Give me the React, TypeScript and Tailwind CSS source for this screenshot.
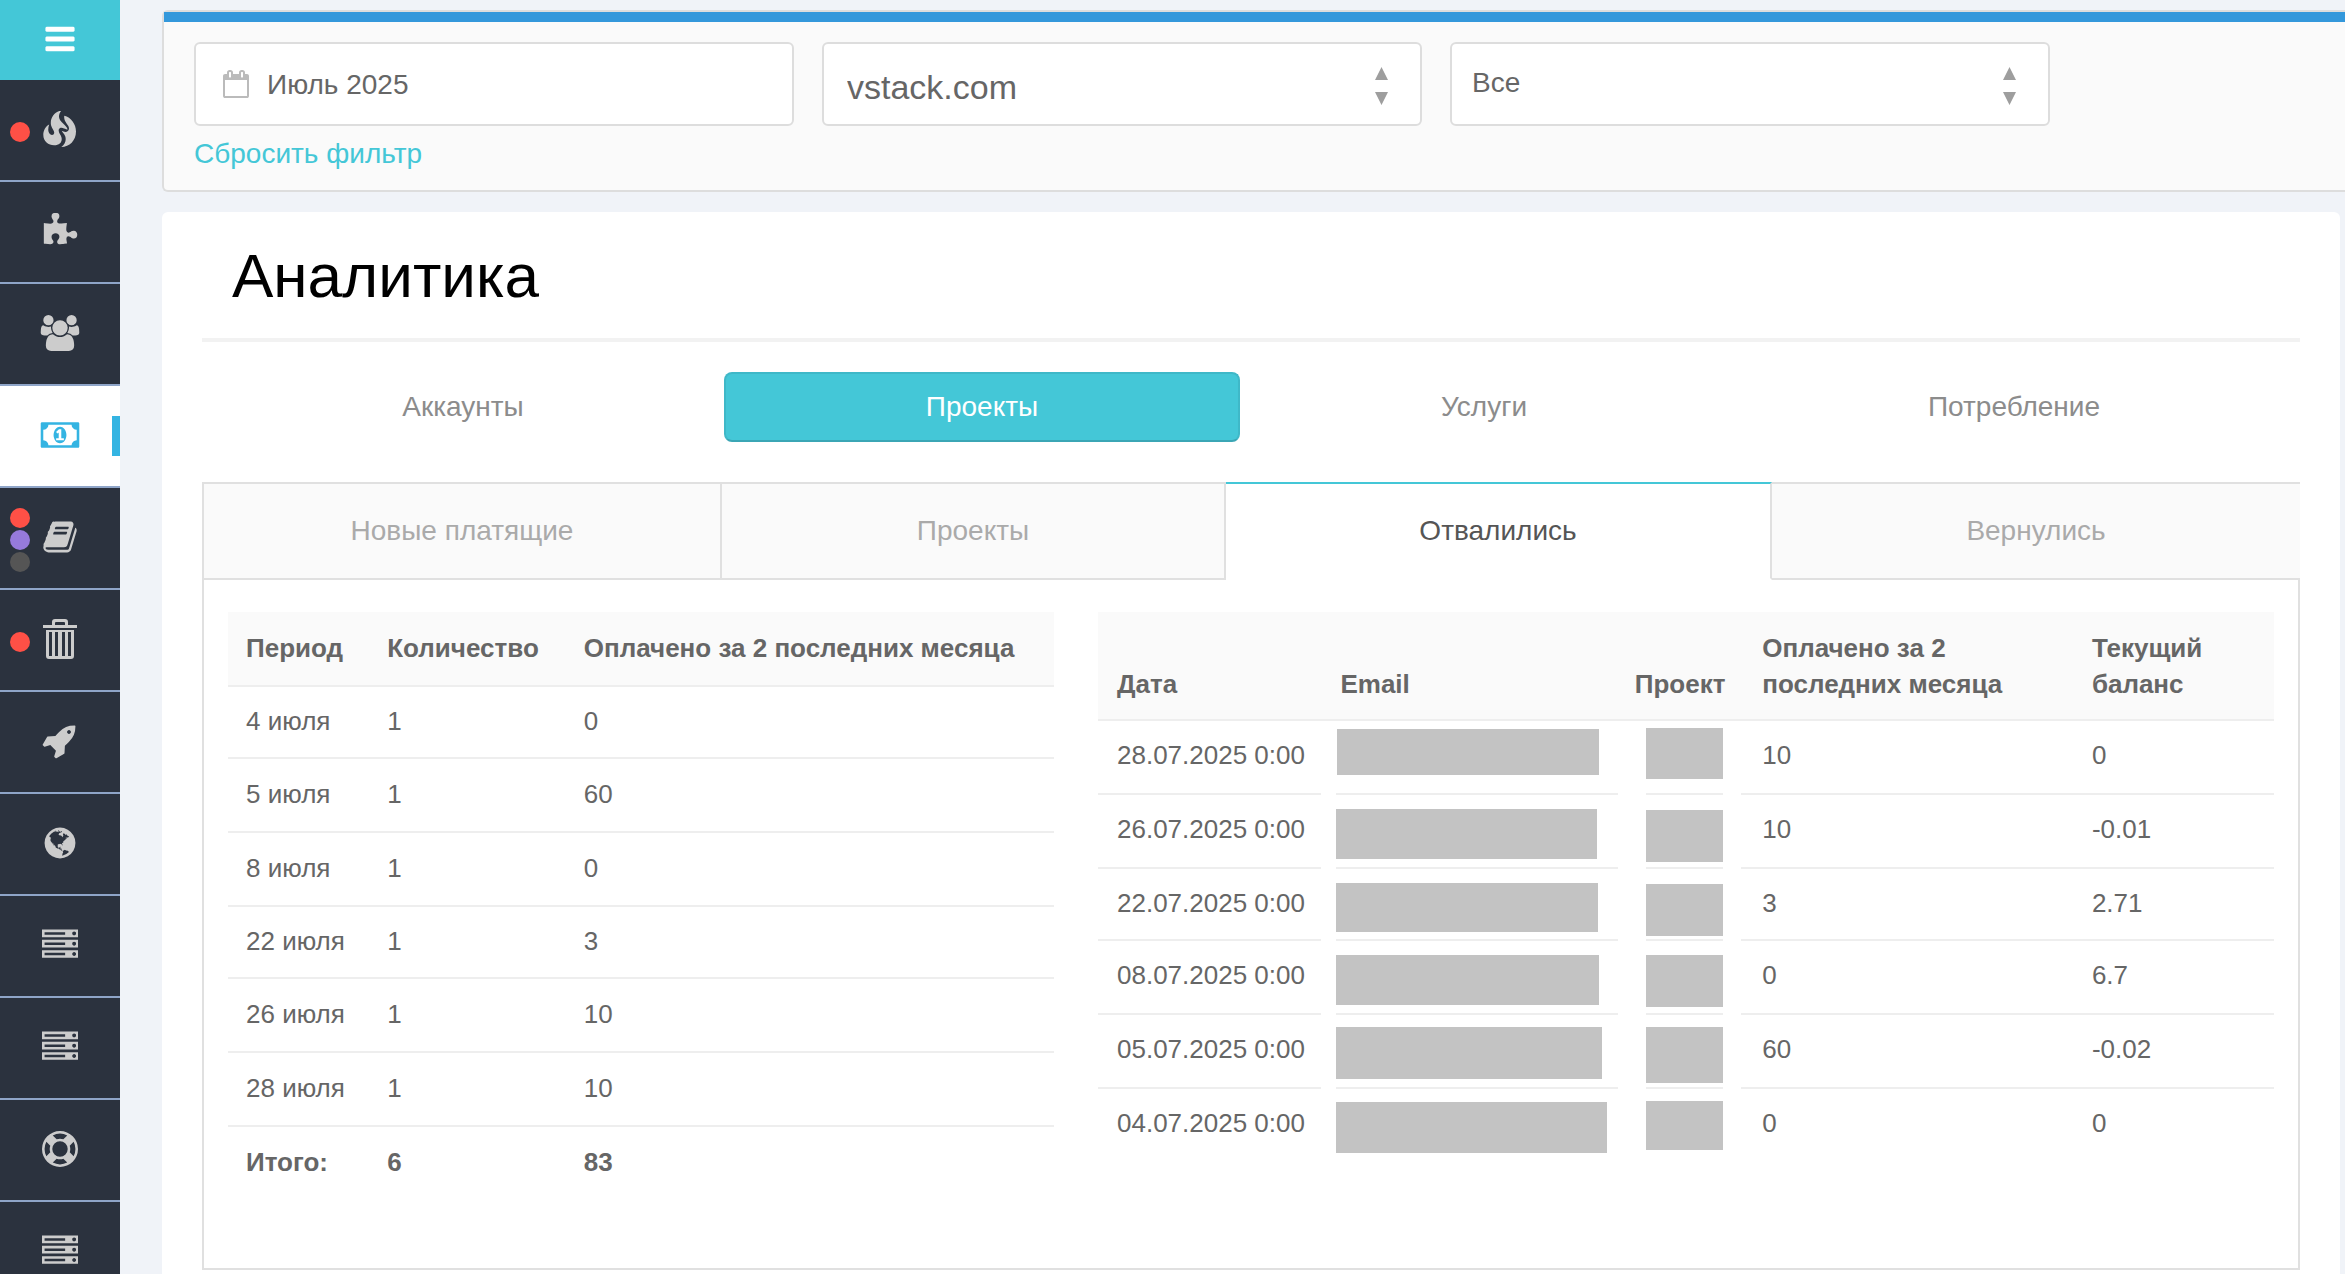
import React from "react";

type Glyph = { box: string; d: string };

const glyphs: Record<string, Glyph> = {
  bars: {
    box: "0 0 1792 1792",
    d: "M1664 1344v128q0 26-19 45t-45 19h-1408q-26 0-45-19t-19-45v-128q0-26 19-45t45-19h1408q26 0 45 19t19 45zm0-512v128q0 26-19 45t-45 19h-1408q-26 0-45-19t-19-45v-128q0-26 19-45t45-19h1408q26 0 45 19t19 45zm0-512v128q0 26-19 45t-45 19h-1408q-26 0-45-19t-19-45v-128q0-26 19-45t45-19h1408q26 0 45 19t19 45z",
  },
  flame: {
    box: "41 111 36 36",
    d: "M60.5 110.5C54 111.500 49.500 117 49.800 123.500C50 128 53.500 130 53.200 133C52.800 136 48.500 135.500 47.500 131.500C47 129.500 47.300 127 48.200 124.500C44.500 126.500 42.300 130.500 42.300 134.800C42.300 141.500 47.500 145.300 53 145.300C59 145.300 61.500 141.500 60.500 137.500C59.800 134.500 57 132.500 57.800 129.500C58.500 127.500 61 127.500 63 128.500C64.500 129 66 129.500 66.500 129.500C66.500 125.500 58.500 122.500 58 117C57.800 114.500 59 112 60.500 110.500ZM63.300 115.800C70 117.500 75 124 75 131.500C75 140.500 68.500 147 60.300 147C64.500 144 65.300 140 64.300 136.500C63.600 134 61.200 132.500 60.800 130.800C63.500 132.500 67.800 132.500 68 128.500C68 124.500 62.200 122 63.300 115.800Z",
  },
  puzzle: {
    box: "0 0 1792 1792",
    d: "M1755 1083q0 81-44.5 135t-123.5 54q-41 0-77.5-17.5t-59-38-56.500-38-71-17.500q-110 0-110 124 0 39 16 115t15 115v5q-22 0-33 1-34 3-97.500 11.500t-115.500 13.500-98 5q-61 0-103-26.500t-42-83.500q0-37 17.500-71t38-56.500 38-59 17.500-77.500q0-79-54-123.500t-135-44.500q-84 0-143 45.500t-59 127.500q0 43 15 83t33.500 64.500 33.500 53 15 50.500q0 45-46 89-37 35-117 35-95 0-245-24-9-2-27.500-4t-27.500-4l-13-2q-1 0-3-1-2 0-2-1v-1024q2 1 17.500 3.500t34 5 21.500 3.500q150 24 245 24 80 0 117-35 46-44 46-89 0-22-15-50.500t-33.500-53-33.500-64.500-15-83q0-82 59-127.500t144-45.500q80 0 134 44.500t54 123.500q0 41-17.500 77.500t-38 59-38 56.500-17.500 71q0 57 42 83.500t103 26.500q64 0 180-15t163-17v2q-1 2-3.500 17.500t-5 34-3.500 21.500q-24 150-24 245 0 80 35 117 44 46 89 46 22 0 50.500-15t53-33.500 64.500-33.500 83-15q82 0 127.500 59t45.500 143z",
  },
  users: {
    box: "0 0 1920 1792",
    d: "M593 896q-162 5-265 128h-134q-82 0-138-40.5t-56-118.5q0-353 124-353 6 0 43.5 21t97.5 42.5 119 21.5q67 0 133-23-5 37-5 66 0 139 81 256zm1071 637q0 120-73 189.5t-194 69.5h-874q-121 0-194-69.5t-73-189.5q0-53 3.5-103.5t14-109 26.5-108.5 43-97.5 62-81 85.5-53.5 111.5-20q10 0 43 21.5t73 48 107 48 135 21.5 135-21.5 107-48 73-48 43-21.5q61 0 111.5 20t85.5 53.5 62 81 43 97.5 26.5 108.5 14 109 3.5 103.5zm-1024-1277q0 106-75 181t-181 75-181-75-75-181 75-181 181-75 181 75 75 181zm704 384q0 159-112.5 271.5t-271.5 112.5-271.5-112.5-112.5-271.5 112.5-271.5 271.5-112.5 271.5 112.5 112.5 271.5zm576 225q0 78-56 118.5t-138 40.5h-134q-103-123-265-128 81-117 81-256 0-29-5-66 66 23 133 23 59 0 119-21.5t97.5-42.5 43.5-21q124 0 124 353zm-128-609q0 106-75 181t-181 75-181-75-75-181 75-181 181-75 181 75 75 181z",
  },
  money: {
    box: "0 0 1920 1792",
    d: "M768 1152h384v-96h-128v-448h-114l-148 137 77 80q42-37 55-57h2v288h-128v96zm512-256q0 70-21 142t-59.5 134-101.5 101-138 39-138-39-101.5-101-59.5-134-21-142 21-142 59.5-134 101.5-101 138-39 138 39 101.5 101 59.5 134 21 142zm512 256v-512q-106 0-181-75t-75-181h-1152q0 106-75 181t-181 75v512q106 0 181 75t75 181h1152q0-106 75-181t181-75zm128-832v1152q0 26-19 45t-45 19h-1792q-26 0-45-19t-19-45v-1152q0-26 19-45t45-19h1792q26 0 45 19t19 45z",
  },
  book: {
    box: "0 0 1792 1792",
    d: "M1703 478q40 57 18 129l-275 906q-19 64-76.5 107.5t-122.5 43.5h-923q-77 0-148.5-53.5t-99.5-131.5q-24-67-2-127 0-4 3-27t4-37q1-8-3-21.5t-3-19.5q2-11 8-21t16.5-23.5 16.5-23.5q23-38 45-91.5t30-91.5q3-10 .5-30t-.5-28q3-11 17-28t17-23q21-36 42-92t25-90q1-9-2.5-32t.5-28q4-13 22-30.5t22-22.5q19-26 42.5-84.5t27.5-96.5q1-8-3-25.5t-2-26.5q2-8 9-18t18-23 17-21q8-12 16.5-30.5t15-35 16-36 19.5-32 26.5-23.5 36-11.5 47.5 5.5l-1 3q38-9 51-9h761q74 0 114 56t18 130l-274 906q-36 119-71.5 153.5t-128.5 34.5h-869q-27 0-38 15-11 16-1 43 24 70 144 70h923q29 0 56-15.5t35-41.5l300-987q7-22 5-57 38 15 59 43zm-1064 2q-4 13 2 22.5t20 9.5h608q13 0 25.5-9.5t16.5-22.5l21-64q4-13-2-22.5t-20-9.5h-608q-13 0-25.5 9.5t-16.5 22.5zm-83 256q-4 13 2 22.5t20 9.5h608q13 0 25.5-9.5t16.5-22.5l21-64q4-13-2-22.5t-20-9.5h-608q-13 0-25.5 9.5t-16.5 22.5z",
  },
  trash: {
    box: "0 0 34 40",
    d: "M9 6V3q0-3 3-3h10q3 0 3 3v3h9v3h-34v-3zM12 6h10v-2q0-1-1-1h-8q-1 0-1 1zM3 11h28v26q0 3-3 3h-22q-3 0-3-3zM6 13v24h3v-24zM12 13v24h3v-24zM19 13v24h3v-24zM25 13v24h3v-24z",
  },
  rocket: {
    box: "0 0 1792 1792",
    d: "M1440 448q0-40-28-68t-68-28-68 28-28 68 28 68 68 28 68-28 28-68zm224-288q0 249-75.5 430.5t-253.5 360.5q-81 80-195 176l-20 379q-2 16-16 26l-384 224q-7 4-16 4-12 0-23-9l-64-64q-13-14-8-32l85-276-281-281-276 85q-3 1-9 1-14 0-23-9l-64-64q-17-19-5-39l224-384q10-14 26-16l379-20q96-114 176-195 188-187 358-258t431-71q14 0 24 9.5t10 22.5z",
  },
  globe: {
    box: "0 0 1792 1792",
    d: "M896 128q209 0 385.5 103t279.5 279.5 103 385.5-103 385.5-279.5 279.5-385.5 103-385.5-103-279.5-279.5-103-385.5 103-385.5 279.500-279.500 385.500-103zm274 521q-2 1-9.500 9.500t-13.500 9.500q2 0 4.500-5t5-11 3.500-7q6-7 22-15 14-6 52-12 34-8 51 11-2-2 9.500-13t14.500-12q3-2 15-4.500t15-7.500l2-22q-12 1-17.500-7t-6.500-21q0 2-6 8 0-7-4.500-8t-11.500 1-9 1q-10-3-15-7.500t-8-16.500-4-15q-2-5-9.500-11t-9.500-10q-1-2-2.500-5.500t-3-6.500-4-5.500-5.500-2.500-7 5-7.500 10-4.500 5q-3-2-6-1.500t-4.500 1-4.500 3-5 3.500q-3 2-8.500 3t-8.500 2q15-5-1-11-10-4-16-3 9-4 7.500-12t-8.500-14h5q-1-4-8.500-8.500t-17.500-8.500-13-6q-8-5-34-9.500t-33-.5q-5 6-4.500 10.500t4 14 3.500 12.500q1 6-5.500 13t-6.500 12q0 7 14 15.500t10 21.500q-3 8-16 16t-16 12q-5 8-1.500 18.500t10.500 16.500q2 2 1.500 4t-3.500 4.500-5.500 4-6.500 3.500l-3 2q-11 5-20.500-6t-13.500-26q-7-25-16-30-23-8-29 1-5-13-41-26-25-9-58-4 6-1 0-15-7-15-19-12 3-6 4-17.500t1-13.500q3-13 12-23 1-1 7-8.500t9.500-13.500.5-6q35 4 50-11 5-5 11.500-17t10.500-17q9-6 14-5.500t14.500 5.500 14.500 5q14 1 15.500-11t-7.500-20q12 1 3-17-4-7-8-9-12-4-27 5-8 4 2 8-1-1-9.500 10.500t-16.500 17.500-16-5q-1-1-5.500-13.500t-9.500-13.500q-8 0-16 15 3-8-11-15t-24-8q19-12-8-27-7-4-20.500-5t-19.500 4q-5 7-5.500 11.500t5 8 10.500 5.500 11.500 4 8.500 3q14 10 8 14-2 1-8.500 3.500t-11.500 4.500-6 4q-3 4 0 14t-2 14q-5-5-9-17.500t-7-16.500q7 9-25 6l-10-1q-4 0-16 2t-20.500 1-13.500-8q-4-8 0-20 1-4 4-2-4-3-11-9.500t-10-8.500q-46 15-94 41 6 1 12-1 5-2 13-6.500t10-5.500q34-14 42-7l5-5q14 16 20 25-7-4-30-1-20 6-22 12 7 12 5 18-4-3-11.500-10t-14.500-11-15-5q-16 0-22 1-146 80-235 222 7 7 12 8 4 1 5 9t2.500 11 11.500-3q9 8 3 19 1-1 44 27 19 17 21 21 3 11-10 18-1-2-9-9t-9-4q-3 5 .5 18.500t10.500 12.500q-7 0-9.500 16t-2.500 35.500-1 23.500l2 1q-3 12 5.500 34.500t21.500 19.500q-13 3 20 43 6 8 8 9 3 2 12 7.500t15 10 10 10.500q4 5 10 22.500t14 23.500q-2 6 9.500 20t10.500 23q-1 0-2.500 1t-2.500 1q3 7 15.500 14t15.500 13q1 3 2 10t3 11 8 2q2-20-24-62-15-25-17-29-3-5-5.500-15.500t-4.500-14.500q2 0 6 1.500t8.500 3.500 7.500 4 2 3q-3 7 2 17.500t12 18.500 17 19 12 13q6 6 14 19.500t0 13.500q9 0 20 10t17 20q5 8 8 26t5 24q2 7 8.500 13.500t12.500 9.500l16 8 13 7q5 2 18.500 10.500t21.500 11.500q10 4 16 4t14.500-2.500 13.500-3.500q15-2 29 15t21 21q36 19 55 11-2 1 .5 7.500t8 15.500 9 14.500 5.500 8.500q5 6 18 15t18 15q6-4 7-9-3 8 7 20t18 10q14-3 14-32-31 15-49-18 0-1-2.500-5.500t-4-8.500-2.500-8.500 0-7.500 5-3q9 0 10-3.500t-2-12.500-4-13q-1-8-11-20t-12-15q-5 9-16 8t-16-9q0 1-1.500 5.500t-1.500 6.500q-13 0-15-1 1-3 2.500-17.500t3.500-22.500q1-4 5.500-12t7.500-14.500 4-12.500-4.500-9.500-17.500-2.500q-19 1-26 20-1 3-3 10.500t-5 11.500-9 7q-7 3-24 2t-24-5q-13-8-22.500-29t-9.500-37q0-10 2.500-26.500t3-25-5.500-24.500q3-2 9-9.500t10-10.500q2-1 4.500-1.500t4.500 0 4-1.500 3-6q-1-1-4-3-3-3-4-3 7 3 28.500-1.500t27.500 1.500q15 11 22-2 0-1-2.500-9.500t-.5-13.500q5 27 29 9 3 3 15.500 5t17.500 5q3 2 7 5.500t5.500 4.500 5-.5 8.500-6.500q10 14 12 24 11 40 19 44 7 3 11 2t4.500-9.500 0-14-1.500-12.500l-1-8v-18l-1-8q-15-3-18.500-12t1.500-18.500 15-18.500q1-1 8-3.500t15.500-6.500 12.500-8q21-19 15-35 7 0 11-9-1 0-5-3t-7.500-5-4.500-2q9-5 2-16 5-3 7.500-11t7.500-10q9 12 21 2 7-8 1-16 5-7 20.500-10.500t18.500-9.500q7 2 8-2t1-12 3-12q4-5 15-9t13-5l17-11q3-4 0-4 18 2 31-11 10-11-6-20 3-6-3-9.500t-15-5.500q3-1 11.500-.5t10.500-1.500q15-10-7-16-17-5-43 12zm-163 877q206-36 351-189-3-3-12.500-4.500t-12.500-3.500q-18-7-24-8 1-7-2.500-13t-8-9-12.500-8-11-7q-2-2-7-6t-7-5.500-7.500-4.500-8.500-2-10 1l-3 1q-3 1-5.500 2.500t-5.500 3-4 3 0 2.500q-21-17-36-22-5-1-11-5.500t-10.500-7-10-1.500-11.500 7q-5 5-6 15t-2 13q-7-5 0-17.500t2-18.500q-3-6-10.500-4.500t-12 4.500-11.500 8.500-9 6.500-8.500 5.500-8.500 7.500q-3 4-6 12t-5 11q-2-4-11.500-6.500t-9.500-5.500q2 10 4 35t5 38q7 31-12 48-27 25-29 40-4 22 12 26 0 7-8 20.500t-7 21.500q0 6 2 16z",
  },
  server: {
    box: "0 0 1792 1792",
    d: "M128 1408h1024v-128h-1024v128zm0-512h1024v-128h-1024v128zm1568 448q0-40-28-68t-68-28-68 28-28 68 28 68 68 28 68-28 28-68zm-1568-960h1024v-128h-1024v128zm1568 448q0-40-28-68t-68-28-68 28-28 68 28 68 68 28 68-28 28-68zm0-512q0-40-28-68t-68-28-68 28-28 68 28 68 68 28 68-28 28-68zm96 832v384h-1792v-384h1792zm0-512v384h-1792v-384h1792zm0-512v384h-1792v-384h1792z",
  },
  lifebuoy: {
    box: "0 0 1792 1792",
    d: "M896 0q182 0 348 71t286 191 191 286 71 348-71 348-191 286-286 191-348 71-348-71-286-191-191-286-71-348 71-348 191-286 286-191 348-71zm0 128q-190 0-361 90l194 194q82-28 167-28t167 28l194-194q-171-90-361-90zm-678 1129l194-194q-28-82-28-167t28-167l-194-194q-90 171-90 361t90 361zm678 407q190 0 361-90l-194-194q-82 28-167 28t-167-28l-194 194q171 90 361 90zm0-384q159 0 271.5-112.5t112.5-271.5-112.5-271.5-271.5-112.5-271.5 112.5-112.5 271.5 112.5 271.5 271.5 112.5zm484-217l194 194q90-171 90-361t-90-361l-194 194q28 82 28 167t-28 167z",
  },
  calendar: {
    box: "64 0 1664 1792",
    d: "M192 1664h1408v-1024h-1408v1024zm384-1216v-288q0-14-9-23t-23-9h-64q-14 0-23 9t-9 23v288q0 14 9 23t23 9h64q14 0 23-9t9-23zm768 0v-288q0-14-9-23t-23-9h-64q-14 0-23 9t-9 23v288q0 14 9 23t23 9h64q14 0 23-9t9-23zm384-64v1280q0 52-38 90t-90 38h-1408q-52 0-90-38t-38-90v-1280q0-52 38-90t90-38h128v-96q0-66 47-113t113-47h64q66 0 113 47t47 113v96h384v-96q0-66 47-113t113-47h64q66 0 113 47t47 113v96h128q52 0 90 38t38 90z",
  },
};

function Icon({ name, className }: { name: string; className: string }) {
  return (
    <svg viewBox={glyphs[name].box} className={className} fill="currentColor" fillRule="evenodd" aria-hidden="true">
      <path d={glyphs[name].d} />
    </svg>
  );
}

type NavItem = { icon: string; label: string; dots?: string[]; active?: boolean };

const nav: NavItem[] = [
  { icon: "flame", label: "Активность", dots: ["bg-[#ff5046]"] },
  { icon: "puzzle", label: "Модули" },
  { icon: "users", label: "Пользователи" },
  { icon: "money", label: "Финансы", active: true },
  { icon: "book", label: "Журнал", dots: ["bg-[#ff5046]", "bg-[#967adc]", "bg-[#555555]"] },
  { icon: "trash", label: "Корзина", dots: ["bg-[#ff5046]"] },
  { icon: "rocket", label: "Запуск" },
  { icon: "globe", label: "Сеть" },
  { icon: "server", label: "Серверы" },
  { icon: "server", label: "Хранилища" },
  { icon: "lifebuoy", label: "Поддержка" },
  { icon: "server", label: "Узлы" },
];

function iconSize(name: string) {
  if (name === "users" || name === "money") return "h-9 w-10";
  if (name === "trash") return "h-10 w-[34px]";
  return "size-9";
}

function Sidebar() {
  return (
    <aside className="flex h-screen w-30 shrink-0 flex-col overflow-hidden bg-[#2b323e]">
      <button type="button" aria-label="Меню" className="flex h-20 shrink-0 items-center justify-center bg-[#44c7d7] pb-0.5 text-white">
        <Icon name="bars" className="size-[34px]" />
      </button>
      <nav className="flex flex-col">
        {nav.map((item) => (
          <a
            key={item.label}
            href="#"
            aria-label={item.label}
            className={
              item.active
                ? "relative flex h-[102px] shrink-0 items-center justify-center border-b-2 border-[#8fa5c8] bg-white pb-0.5 text-[#34b4e2]"
                : "relative flex h-[102px] shrink-0 items-center justify-center border-b-2 border-[#8fa5c8] pb-0.5 text-[#cccccc]"
            }
          >
            {item.dots && (
              <span className="absolute inset-y-0 left-2.5 flex flex-col justify-center gap-0.5 pt-1">
                {item.dots.map((c) => (
                  <span key={c} className={`${c} size-5 rounded-full`} />
                ))}
              </span>
            )}
            <Icon name={item.icon} className={iconSize(item.icon)} />
            {item.active && <span className="absolute top-[30px] right-0 h-10 w-2 bg-[#34b4e2]" />}
          </a>
        ))}
      </nav>
    </aside>
  );
}

function Chevrons() {
  return (
    <svg viewBox="0 0 13 38" className="pointer-events-none absolute top-[23px] right-8 h-[38px] w-[13px]" fill="#9e9e9e" aria-hidden="true">
      <path d="M6.500 0L13 13H0zM6.500 38L0 25H13z" />
    </svg>
  );
}

function Filters() {
  const field = "relative flex h-21 w-150 items-center rounded-md border-2 border-[#dddddd] bg-white text-[#666666]";
  return (
    <section className="rounded-l-md border-2 border-r-0 border-[#dddddd] bg-[#fafafa]">
      <div className="h-2.5 bg-[#3498db]" />
      <div className="px-[30px] pt-5 pb-4">
        <div className="flex gap-7">
          <label className={field}>
            <Icon name="calendar" className="mr-[18px] ml-[27px] h-7 w-[26px] shrink-0 text-[#bbbbbb]" />
            <input type="text" aria-label="Период" defaultValue="Июль 2025" className="min-w-0 grow pt-0.5 text-[28px] outline-none" />
          </label>
          <label className={field}>
            <select aria-label="Компания" className="h-full w-full appearance-none bg-transparent pt-1.5 pl-[23px] text-[34px] outline-none">
              <option>vstack.com</option>
            </select>
            <Chevrons />
          </label>
          <label className={field}>
            <select aria-label="Тип" className="h-full w-full appearance-none bg-transparent pb-0.5 pl-5 text-[28px] outline-none">
              <option>Все</option>
            </select>
            <Chevrons />
          </label>
        </div>
        <a href="#" className="mt-2 inline-block text-[28px] leading-10 text-[#44c7d7]">
          Сбросить фильтр
        </a>
      </div>
    </section>
  );
}

const summary = [
  ["4 июля", "1", "0"],
  ["5 июля", "1", "60"],
  ["8 июля", "1", "0"],
  ["22 июля", "1", "3"],
  ["26 июля", "1", "10"],
  ["28 июля", "1", "10"],
];

function SummaryTable() {
  return (
    <table className="w-full table-fixed self-start text-left">
      <colgroup>
        <col className="w-[17.1%]" />
        <col className="w-[23.8%]" />
        <col />
      </colgroup>
      <thead>
        <tr className="h-[74px] border-b-2 border-[#eeeeee] bg-[#fafafa]">
          {["Период", "Количество", "Оплачено за 2 последних месяца"].map((h) => (
            <th key={h} className="px-[18px] pb-0.5 whitespace-nowrap">{h}</th>
          ))}
        </tr>
      </thead>
      <tbody>
        {summary.map((row) => (
          <tr key={row[0]} className="h-[74px] border-b-2 border-[#eeeeee] [&:nth-child(3n+1)]:h-[72px]">
            {row.map((cell, i) => (
              <td key={i} className="px-[18px] pb-0.5">{cell}</td>
            ))}
          </tr>
        ))}
      </tbody>
      <tfoot>
        <tr className="h-[72px] font-bold">
          <td className="px-[18px] pb-0.5">Итого:</td>
          <td className="px-[18px] pb-0.5">6</td>
          <td className="px-[18px] pb-0.5">83</td>
        </tr>
      </tfoot>
    </table>
  );
}

const projects = [
  { date: "28.07.2025 0:00", paid: "10", balance: "0", email: "mt-2 ml-px h-[46px] w-[262px]", project: "mt-[7px] h-[51px]" },
  { date: "26.07.2025 0:00", paid: "10", balance: "-0.01", email: "mt-3.5 h-[50px] w-[261px]", project: "mt-[15px] h-[52px]" },
  { date: "22.07.2025 0:00", paid: "3", balance: "2.71", email: "mt-3.5 h-[49px] w-[262px]", project: "mt-[15px] h-[52px]" },
  { date: "08.07.2025 0:00", paid: "0", balance: "6.7", email: "mt-3.5 h-[50px] w-[263px]", project: "mt-3.5 h-[52px]" },
  { date: "05.07.2025 0:00", paid: "60", balance: "-0.02", email: "mt-3 h-[52px] w-[266px]", project: "mt-3 h-[56px]" },
  { date: "04.07.2025 0:00", paid: "0", balance: "0", email: "mt-[13px] h-[51px] w-[271px]", project: "mt-3 h-[49px]" },
];

function ProjectsTable() {
  return (
    <table className="w-full table-fixed self-start text-left">
      <colgroup>
        <col className="w-[19%]" />
        <col className="w-[25.2%]" />
        <col className="w-[10.5%]" />
        <col className="w-[28.2%]" />
        <col />
      </colgroup>
      <thead>
        <tr className="h-[108px] border-b-2 border-[#eeeeee] bg-[#fafafa] align-bottom">
          <th className="pb-[17px] pl-[19px]">Дата</th>
          <th className="pb-[17px] pl-[19px]">Email</th>
          <th className="pb-[17px] pl-[17px]">Проект</th>
          <th className="pr-[19px] pb-[17px] pl-[21px]">Оплачено за 2 последних месяца</th>
          <th className="px-[19px] pb-[17px]">Текущий баланс</th>
        </tr>
      </thead>
      <tbody>
        {projects.map((p, i) => {
          const last = i === projects.length - 1;
          const h = i % 3 === 2 ? "h-[72px]" : "h-[74px]";
          const line = last ? "" : "border-b-2 border-[#eeeeee]";
          return (
            <tr key={p.date}>
              <td className="p-0 whitespace-nowrap">
                <div className={`${h} ${line} pt-4 pl-[19px]`}>{p.date}</div>
              </td>
              <td className="p-0 pl-[15px]">
                <div className={`${h} ${line} flow-root`}>
                  <div className={`${p.email} bg-[#c3c3c3]`} />
                </div>
              </td>
              <td className="p-0 pr-[18px] pl-7">
                <div className={`${h} ${line} flow-root`}>
                  <div className={`${p.project} bg-[#c3c3c3]`} />
                </div>
              </td>
              <td className="p-0">
                <div className={`${h} ${line} pt-4 pl-[21px]`}>{p.paid}</div>
              </td>
              <td className="p-0">
                <div className={`${h} ${line} pt-4 pl-[19px]`}>{p.balance}</div>
              </td>
            </tr>
          );
        })}
      </tbody>
    </table>
  );
}

function Tabs() {
  const idle = "border-t-2 border-b-2 border-[#e0e0e0] bg-[#fafafa] text-[#aaaaaa]";
  return (
    <div role="tablist" className="grid h-[98px] grid-cols-[520fr_504fr_546fr_528fr] text-[28px]">
      <button type="button" role="tab" aria-selected="false" className={`${idle} border-x-2`}>Новые платящие</button>
      <button type="button" role="tab" aria-selected="false" className={`${idle} border-r-2`}>Проекты</button>
      <button
        type="button"
        role="tab"
        aria-selected="true"
        className="border-y-2 border-r-2 border-t-[#44c7d7] border-r-[#e0e0e0] border-b-white bg-white text-[#555555]"
      >
        Отвалились
      </button>
      <button type="button" role="tab" aria-selected="false" className={idle}>Вернулись</button>
    </div>
  );
}

function Analytics() {
  return (
    <section className="mt-5 mr-[5px] grow rounded-t-md bg-white px-10">
      <h1 className="flex h-[126px] items-center pt-0.5 pl-[30px] text-[62px] leading-none text-black">Аналитика</h1>
      <hr className="border-t-4 border-[#f2f2f2]" />
      <div className="mt-[30px] mb-10 grid h-[70px] grid-cols-[522fr_516fr_488fr_572fr] text-[28px] text-[#8c8c8c]">
        <button type="button">Аккаунты</button>
        <button type="button" className="rounded-lg border-2 border-[#3fb8c8] border-b-[#3ba6b5] bg-[#44c7d7] text-white">
          Проекты
        </button>
        <button type="button">Услуги</button>
        <button type="button">Потребление</button>
      </div>
      <Tabs />
      <div className="grid grid-cols-[826fr_1176fr] gap-11 border-2 border-t-0 border-[#e0e0e0] px-6 pt-8 pb-[70px] text-[26px] leading-9 text-[#666666]">
        <SummaryTable />
        <ProjectsTable />
      </div>
    </section>
  );
}

export default function App() {
  return (
    <div className="flex h-screen overflow-hidden bg-[#f0f3f8] font-['Liberation_Sans',Arial,sans-serif]">
      <Sidebar />
      <main className="flex min-w-0 grow flex-col pt-2.5 pl-[42px]">
        <Filters />
        <Analytics />
      </main>
    </div>
  );
}
